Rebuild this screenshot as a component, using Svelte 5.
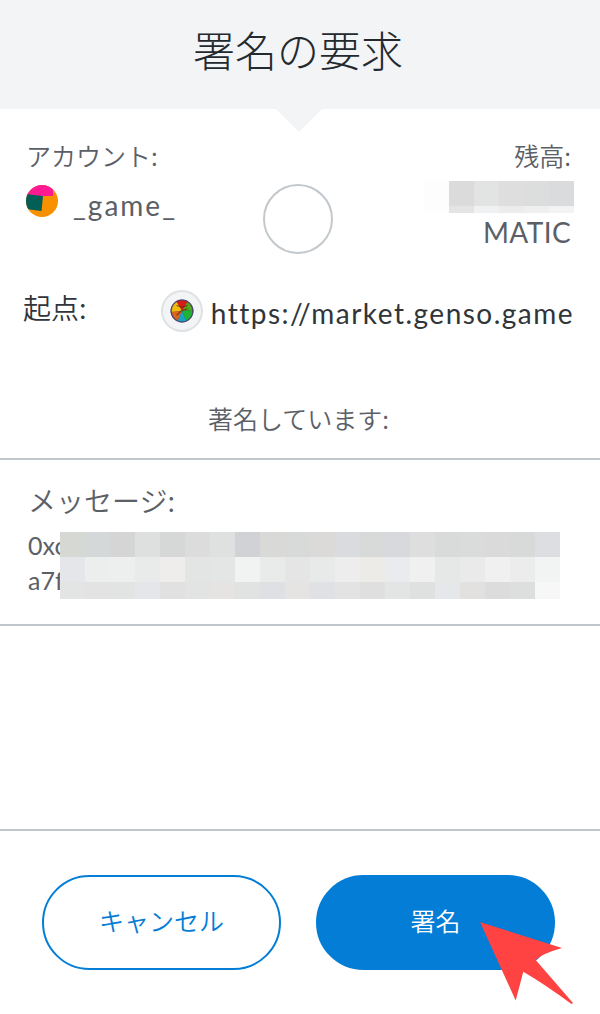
<script lang="ts">
  const account = '_game_'
  const origin = 'https://market.genso.game'

  // masked areas, one colour per tile
  const balanceMask = [
    ['#fdfdfd', '#dbdbdb', '#e2e4e3', '#dedede', '#dcdddd', '#dadbdd'],
    ['#fdfdfd', '#e4e4e4', '#eff1f2', '#ececec', '#efefef', '#f3f3f3'],
  ]
  const messageMask = [
    ['#d6d8d4', '#d4d8d9', '#d5d5d6', '#dde0df', '#d6d8d7', '#dcdcdd', '#dee1e0', '#d1d2d5', '#d9d9d7', '#d8dad9',
      '#dcdad9', '#d9dbde', '#d8dad9', '#d7d9dc', '#dedede', '#d8dbda', '#dadcdb', '#dadada', '#d8dada', '#dddee1'],
    ['#e4e6e9', '#eceeee', '#edeeee', '#e9ebea', '#eeedeb', '#e3e5e4', '#e4e6e5', '#f1f3f2', '#e9ebea', '#e5e5e5',
      '#e7eae9', '#ededed', '#ecebe8', '#e9ebee', '#f0f0f0', '#e5e8e7', '#eaeaea', '#f0f0f0', '#ececec', '#f2f4f3'],
    ['#e3e5e4', '#e2e3e2', '#e2e3e3', '#e4e6ea', '#e1e1e2', '#e2e4e3', '#e5e4e2', '#e1e3e2', '#dfe0e4', '#e5e4e2',
      '#dfe1e5', '#e3e3e4', '#dfdfdf', '#e3e5e4', '#dee1e0', '#e5e7ea', '#e3e1df', '#dcdcdc', '#dcdfde', '#f7f7f7'],
  ]
</script>

<div class="request">
  <header class="header">
    <h1>署名の要求</h1>
    <svg class="tip" width="50" height="24" viewBox="0 0 50 24"><path d="M1 0H49L25 24Z" fill="#f2f4f6" /></svg>
  </header>

  <section class="summary">
    <div class="account">
      <div class="label">アカウント:</div>
      <div class="account-row">
        <svg class="avatar" width="32" height="32" viewBox="0 0 32 32">
          <defs><clipPath id="round"><circle cx="16" cy="16" r="16" /></clipPath></defs>
          <g clip-path="url(#round)">
            <rect width="32" height="32" fill="#f79100" />
            <path d="M0 0H27V11H0Z" fill="#ff1a94" />
            <path d="M0 9L17 11L15.500 26L0 24Z" fill="#035e56" />
          </g>
        </svg>
        <span class="name">{account}</span>
      </div>
    </div>
    <div class="ring"></div>
    <div class="balance">
      <div class="label">残高:</div>
      <div class="mask balance-mask">
        {#each balanceMask as row}
          {#each row as color}
            <i style="background: {color}"></i>
          {/each}
        {/each}
      </div>
      <div class="unit">MATIC</div>
    </div>
  </section>

  <section class="origin">
    <div class="origin-label">起点:</div>
    <div class="site-icon">
      <svg width="24" height="24" viewBox="0 0 22 22">
        <circle cx="11" cy="11" r="10.500" fill="#35405c" />
        <path d="M11 11L5 3A10 10 0 0 1 17 3Z" fill="#d91c13" />
        <path d="M11 11L1.500 12A10 10 0 0 1 6 2.500Z" fill="#f1bd0d" />
        <path d="M11 11L16 2.500A10 10 0 0 1 20.500 10Z" fill="#55a51d" />
        <path d="M11 11L20.500 10A10 10 0 0 1 15 20Z" fill="#20b332" />
        <path d="M11 11L15 20A10 10 0 0 1 7 20Z" fill="#15a6c5" />
        <path d="M11 11L7 20A10 10 0 0 1 1.500 12Z" fill="#d9661d" />
        <path d="M6 6L11 7.500L16 6M6 15L10 11L16 9" fill="none" stroke="#5a1d18" stroke-opacity=".7" />
        <circle cx="11" cy="11" r="10" fill="none" stroke="#534073" stroke-opacity=".7" />
      </svg>
    </div>
    <div class="url">{origin}</div>
  </section>

  <div class="signing">著名しています:</div>

  <section class="message">
    <div class="message-label">メッセージ:</div>
    <div class="message-body">
      <div>0xc</div>
      <div>a7f</div>
      <div class="mask message-mask">
        {#each messageMask as row}
          {#each row as color}
            <i style="background: {color}"></i>
          {/each}
        {/each}
      </div>
    </div>
  </section>

  <footer class="footer">
    <button class="btn cancel">キャンセル</button>
    <button class="btn sign">署名</button>
    <svg class="cursor" width="94" height="83" viewBox="0 0 94 83">
      <path d="M0 0L82 26Q61 32 55.700 38L93 81L91.500 82Q66 63 43.300 49.700L35.700 78.500Z" fill="#ff4242" />
    </svg>
  </footer>
</div>

<style>
  :global(body) {
    background: #fff;
  }

  .request {
    box-sizing: border-box;
    width: 600px;
    height: 1014px;
    overflow: hidden;
    color: #5b6067;
    background: #fff;
    font-family: Lato, "Noto Sans CJK JP", sans-serif;
  }

  .header {
    position: relative;
    display: flex;
    justify-content: center;
    height: 109px;
    background: #f2f4f6;
  }

  h1 {
    margin: 0;
    padding-right: 4px;
    color: #24292e;
    font-family: "Noto Sans CJK JP", sans-serif;
    font-size: 42px;
    font-weight: 300;
    line-height: 97px;
  }

  .tip {
    position: absolute;
    top: 108px;
    left: 274px;
  }

  .summary {
    display: flex;
    justify-content: space-between;
    height: 165px;
    padding: 30px 26px 0;
    box-sizing: border-box;
  }

  .account {
    width: 146px;
  }

  .balance {
    width: 150px;
    text-align: right;
  }

  .label,
  .signing,
  .origin-label,
  .message-label {
    font-family: "Noto Sans CJK JP", sans-serif;
    font-weight: 350;
  }

  .label {
    height: 34px;
    font-size: 25px;
    line-height: 32px;
    white-space: nowrap;
  }

  .account-row {
    display: flex;
    gap: 15px;
    padding-top: 12px;
  }

  .avatar {
    flex-shrink: 0;
  }

  .name {
    font-size: 28px;
    line-height: 40px;
    letter-spacing: 2px;
  }

  .ring {
    box-sizing: border-box;
    width: 70px;
    height: 70px;
    margin-top: 45px;
    border: 2px solid #c3c8cc;
    border-radius: 50%;
  }

  .balance .label,
  .unit {
    padding-right: 3px;
  }

  .mask {
    display: grid;
  }

  .balance-mask {
    grid-template-columns: repeat(6, 25px);
    grid-template-rows: 25px 7px;
    margin-top: 8px;
  }

  .unit {
    font-size: 28px;
    line-height: 39px;
    letter-spacing: 0.4px;
  }

  .origin {
    display: flex;
    height: 80px;
    padding: 16px 26px 0 23px;
    color: #30353a;
  }

  .origin-label {
    width: 139px;
    font-size: 28px;
    line-height: 35px;
  }

  .site-icon {
    box-sizing: border-box;
    display: flex;
    align-items: center;
    justify-content: center;
    width: 42px;
    height: 42px;
    border: 2px solid #dfe1e3;
    border-radius: 50%;
    background: #f2f4f6;
  }

  .url {
    margin-left: 8px;
    font-size: 28px;
    line-height: 46px;
    letter-spacing: 1.48px;
    white-space: nowrap;
  }

  .signing {
    box-sizing: border-box;
    height: 90px;
    padding: 30px 3px 0 0;
    border-bottom: 2px solid #c1c6ca;
    font-size: 25px;
    line-height: 36px;
    text-align: center;
  }

  .message {
    box-sizing: border-box;
    height: 166px;
    padding: 20px 28px 0;
    border-bottom: 2px solid #c1c6ca;
  }

  .message-label {
    font-size: 28px;
    line-height: 40px;
  }

  .message-body {
    position: relative;
    padding-top: 8px;
    font-size: 25px;
    line-height: 35px;
  }

  .message-mask {
    position: absolute;
    top: 12px;
    left: 32px;
    grid-template-columns: repeat(20, 25px);
    grid-template-rows: 25px 25px 17px;
  }

  .footer {
    position: relative;
    display: flex;
    gap: 35px;
    box-sizing: border-box;
    height: 185px;
    margin-top: 203px;
    padding: 44px 42px 0;
    border-top: 2px solid #c1c6ca;
  }

  .btn {
    box-sizing: border-box;
    width: 239px;
    height: 95px;
    padding: 0 0 6px;
    border: 2px solid #037dd6;
    border-radius: 48px;
    font-family: "Noto Sans CJK JP", sans-serif;
    font-size: 25px;
    font-weight: 350;
  }

  .cancel {
    color: #037dd6;
    background: #fff;
  }

  .sign {
    color: #fff;
    background: #037dd6;
  }

  .cursor {
    position: absolute;
    top: 91px;
    left: 480px;
  }
</style>
